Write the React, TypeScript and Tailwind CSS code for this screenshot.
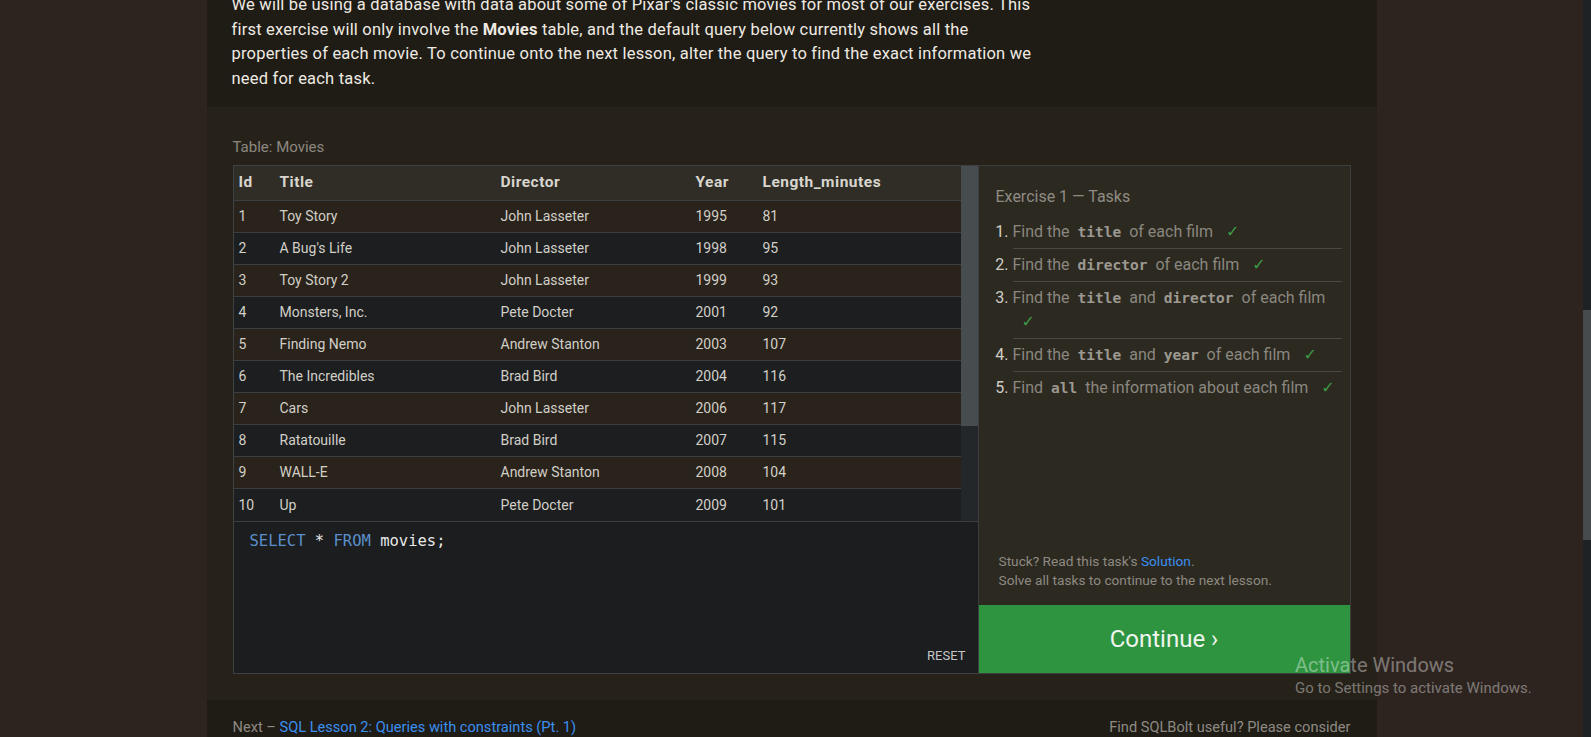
import type { ReactNode } from 'react';

const movies: [number, string, string, number, number][] = [
  [1, 'Toy Story', 'John Lasseter', 1995, 81],
  [2, "A Bug's Life", 'John Lasseter', 1998, 95],
  [3, 'Toy Story 2', 'John Lasseter', 1999, 93],
  [4, 'Monsters, Inc.', 'Pete Docter', 2001, 92],
  [5, 'Finding Nemo', 'Andrew Stanton', 2003, 107],
  [6, 'The Incredibles', 'Brad Bird', 2004, 116],
  [7, 'Cars', 'John Lasseter', 2006, 117],
  [8, 'Ratatouille', 'Brad Bird', 2007, 115],
  [9, 'WALL-E', 'Andrew Stanton', 2008, 104],
  [10, 'Up', 'Pete Docter', 2009, 101],
];

const Code = ({ children }: { children: ReactNode }) => (
  <code className="px-[4px] font-['DejaVu_Sans_Mono',monospace] text-[14.5px] font-bold text-[#9d9991]">
    {children}
  </code>
);

const Check = () => <span className="ml-[9px] font-['DejaVu_Sans',sans-serif] text-[16px] text-[#3e9b45]">✓</span>;

const tasks: ReactNode[] = [
  <>Find the <Code>title</Code> of each film <Check /></>,
  <>Find the <Code>director</Code> of each film <Check /></>,
  <>Find the <Code>title</Code> and <Code>director</Code> of each film<br /><Check /></>,
  <>Find the <Code>title</Code> and <Code>year</Code> of each film <Check /></>,
  <>Find <Code>all</Code> the information about each film <Check /></>,
];

const cols = 'grid grid-cols-[41px_221px_195px_67px_1fr] items-center';

function MoviesTable() {
  return (
    <div className="flex h-[355px]">
      <div className="min-w-0 flex-1">
        <div className={`${cols} h-[35px] border-b border-[#3b3e40] bg-[#2f2d26] text-[15.5px] font-bold tracking-[0.5px] text-[#d8d5ce]`}>
          <div className="px-[5px]">Id</div>
          <div className="px-[5px]">Title</div>
          <div className="px-[5px]">Director</div>
          <div className="px-[5px]">Year</div>
          <div className="px-[5px]">Length_minutes</div>
        </div>
        {movies.map((m, i) => (
          <div
            key={m[0]}
            className={`${cols} h-[32px] text-[#d2cfc7] ${i % 2 === 0 ? 'bg-[#29231b]' : 'bg-[#1c1e20]'} ${
              i < movies.length - 1 ? 'border-b border-[#3b3e40]' : ''
            }`}
          >
            {m.map((v, j) => (
              <div key={j} className="px-[5px]">
                {v}
              </div>
            ))}
          </div>
        ))}
      </div>
      {/* table scrollbar */}
      <div className="flex w-[17px] flex-col bg-[#24272a]">
        <div className="h-[260px] bg-[#474c4f]" />
      </div>
    </div>
  );
}

function Editor() {
  return (
    <div className="flex flex-1 flex-col border-t border-[#3b3e40] bg-[#1b1d1f] pb-[9px] pl-[16px] pr-[12px] pt-[9px]">
      <div className="font-['DejaVu_Sans_Mono',monospace] text-[15.5px] leading-[20px] text-[#e8e8e8]">
        <span className="text-[#5b8fcb]">SELECT</span> * <span className="text-[#5b8fcb]">FROM</span> movies;
      </div>
      <div className="mt-auto self-end text-[13px] leading-[16px] text-[#c6c6c6]">RESET</div>
    </div>
  );
}

function TasksPanel() {
  return (
    <div className="flex flex-1 flex-col border border-[#3b3d3e] bg-[#2c2921]">
      <div className="pl-[17px] pr-[8px] pt-[19px]">
        <div className="text-[16px] leading-[24px] text-[#8f8b83]">Exercise 1 — Tasks</div>
        <ol className="mt-[7px] list-decimal pl-[17px] text-[16px] leading-[24px] text-[#8a877f] marker:text-[#d0cdc6]">
          {tasks.map((t, i) => (
            <li key={i} className={`py-[4px] ${i < tasks.length - 1 ? 'border-b border-[#4a4841]' : ''}`}>
              {t}
            </li>
          ))}
        </ol>
      </div>
      <div className="mb-[15px] mt-auto pl-[20px] text-[13.7px] leading-[19px] text-[#8e8a82]">
        <div>
          Stuck? Read this task's <span className="text-[#3b8ff0]">Solution</span>.
        </div>
        <div>Solve all tasks to continue to the next lesson.</div>
      </div>
      <div className="flex h-[68px] items-center justify-center bg-[#2e9440] text-[24px] text-[#eef5ee]">
        Continue ›
      </div>
    </div>
  );
}

export default function App() {
  return (
    <div className="relative flex h-[737px] w-full overflow-hidden bg-[#2d2420] font-['Segoe_UI',Roboto,sans-serif] text-[14px]">
      <div className="min-w-0 flex-1">
        <div className="mx-auto w-[1170px]">
          {/* intro */}
          <section className="h-[107px] overflow-hidden bg-[#1f1c16] pl-[25px]">
            <p className="-mt-[7px] text-[16.5px] leading-[24.5px] tracking-[0.2px] text-[#eeeae2]">
              We will be using a database with data about some of Pixar's classic movies for most of our exercises. This
              <br />
              first exercise will only involve the <b>Movies</b> table, and the default query below currently shows all the
              <br />
              properties of each movie. To continue onto the next lesson, alter the query to find the exact information we
              <br />
              need for each task.
            </p>
          </section>

          {/* exercise */}
          <section className="bg-[#26221a] px-[26px] pb-[26px] pt-[30px]">
            <div className="text-[15px] leading-[20px] text-[#8c8880]">Table: Movies</div>
            <div className="mt-[8px] flex h-[509px]">
              <div className="flex w-[745px] flex-col border-y border-l border-[#3e4143]">
                <MoviesTable />
                <Editor />
              </div>
              <TasksPanel />
            </div>
          </section>

          {/* footer */}
          <footer className="flex h-[40px] justify-between bg-[#1f1c16] px-[26px] pt-[17px] text-[14.6px] leading-[20px] text-[#8e8a82]">
            <div>
              Next – <span className="text-[#3b8ff0]">SQL Lesson 2: Queries with constraints (Pt. 1)</span>
            </div>
            <div>Find SQLBolt useful? Please consider</div>
          </footer>
        </div>
      </div>

      {/* page scrollbar */}
      <div className="w-[8px] bg-[#1f2224]">
        <div className="mt-[310px] h-[230px] bg-[#464b4e]" />
      </div>

      {/* windows activation watermark */}
      <div className="pointer-events-none absolute left-[1295px] top-[652px] text-white/40">
        <div className="text-[20px] leading-[26px]">Activate Windows</div>
        <div className="text-[15px] leading-[20px]">Go to Settings to activate Windows.</div>
      </div>
    </div>
  );
}
